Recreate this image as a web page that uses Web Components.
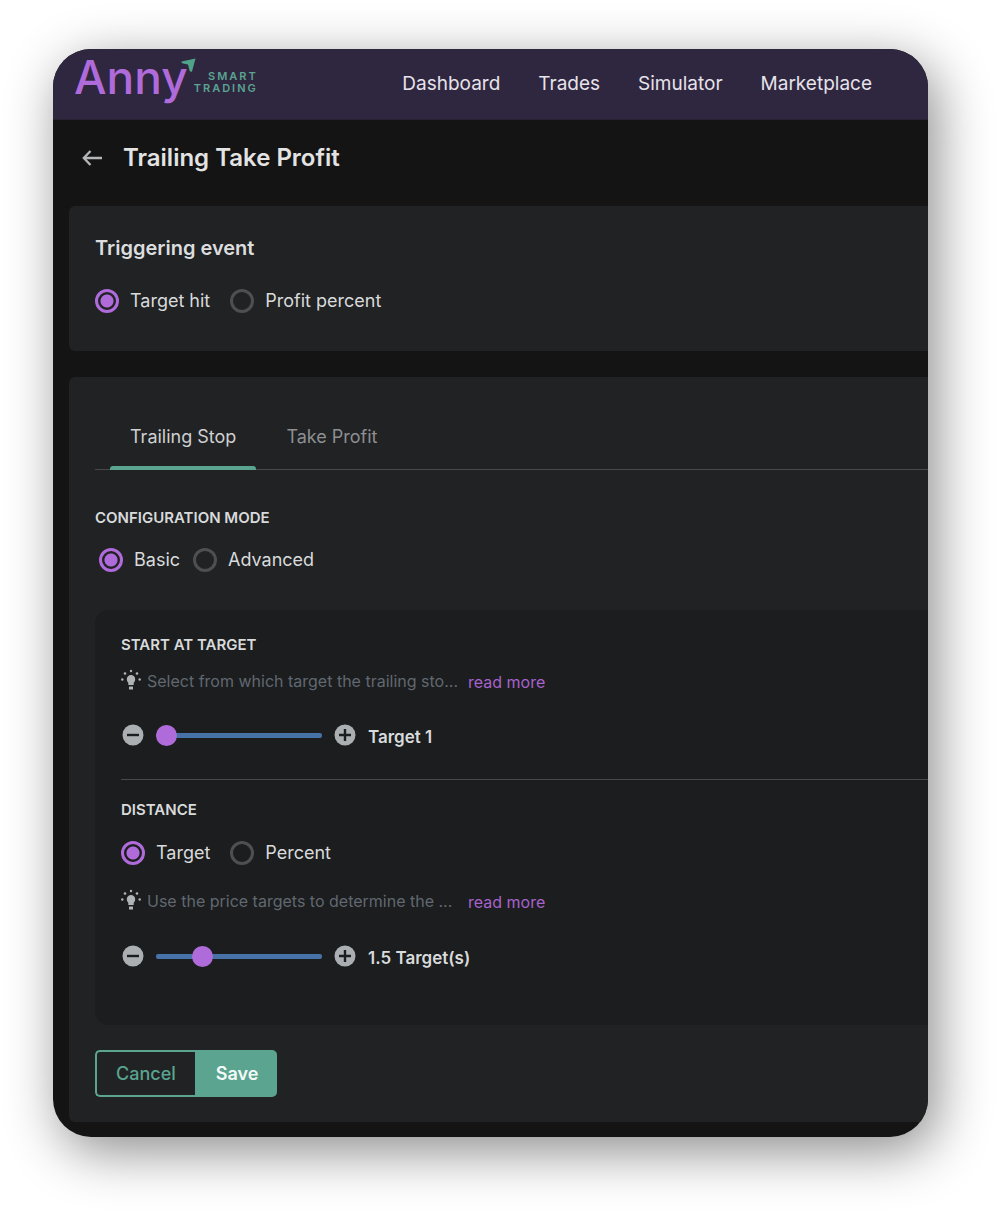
<!DOCTYPE html>
<html lang="en">
<head>
<meta charset="utf-8">
<meta name="viewport" content="width=device-width, initial-scale=1">
<title>Trailing Take Profit</title>
<style>
:root{--purple:#b06bdb;--green:#5aa490;--text:#d9dadb;--line:#47494b;--card:#202224;--panel:#1b1d1e;--page:#141414}
body{margin:0;padding:49px 72px 75px 53px;background:#fff;color:var(--text);font-family:Inter,"Liberation Sans",sans-serif;font-size:18px;line-height:24px}
</style>
</head>
<body>
<app-window>
  <app-header slot="header"></app-header>
  <page-title>Trailing Take Profit</page-title>
  <trigger-card></trigger-card>
  <settings-card></settings-card>
</app-window>
<script>
function define(name, html, setup) {
  customElements.define(name, class extends HTMLElement {
    constructor() {
      super();
      this.attachShadow({mode: 'open'});
    }
    connectedCallback() {
      if (this.shadowRoot.firstChild) return;
      const t = document.createElement('template');
      t.innerHTML = typeof html === 'function' ? html(this) : html;
      this.shadowRoot.append(t.content.cloneNode(true));
      if (setup) setup(this.shadowRoot, this);
    }
  });
}

define('app-window', `
<style>
:host{display:block;background:var(--page);border-radius:38px;box-shadow:8px 14px 54px rgba(0,0,0,.46)}
.clip{overflow:hidden;border-radius:inherit}
main{display:flex;flex-direction:column;gap:26px;padding:25px 0 15px 16px}
</style>
<div class="clip"><slot name="header"></slot><main><slot></slot></main></div>`);

define('brand-logo', `
<style>
:host{display:block}
a{display:flex;align-items:flex-start;color:var(--purple);text-decoration:none}
.word{font-size:46px;line-height:56px;font-weight:500}
svg{width:15px;height:15px;margin:9px 0 0 -7px}
.sub{color:var(--green);font-size:11px;line-height:12px;font-weight:600;letter-spacing:2px;text-align:right;margin:21px 0 0 -2px}
.sub span{display:block}
</style>
<a href="#"><span class="word">Anny</span><svg viewBox="0 0 15 15" aria-hidden="true"><path d="M14.500.5L.5 3.600Q0 5 2 5.500L7 6.500L8.500 12.500Q9.500 14.500 11 13.500Z" fill="#4fa389"/></svg><span class="sub"><span>SMART</span><span>TRADING</span></span></a>`);

define('app-header', `
<style>
:host{display:flex;align-items:flex-start;justify-content:space-between;height:71px;box-sizing:border-box;padding:0 56px 0 21px;background:#2f2640;border-bottom:1px solid #28212f}
nav{display:flex;gap:38px;padding-top:23px}
nav a{color:#e6e3ea;text-decoration:none;font-size:19px;line-height:24px}
</style>
<brand-logo></brand-logo>
<nav><a href="#">Dashboard</a><a href="#">Trades</a><a href="#">Simulator</a><a href="#">Marketplace</a></nav>`);

define('page-title', `
<style>
:host{display:flex;align-items:center;gap:19px;padding:0 0 9px 12px}
button{display:flex;border:0;padding:0;background:none;color:#b4b6b7}
svg{width:23px;height:24px}
h1{margin:0;font-size:24px;line-height:26px;font-weight:600;color:#e3e3e3}
</style>
<button aria-label="Back"><svg viewBox="0 0 23 24" fill="none" stroke="currentColor" stroke-width="2.300"><path d="M21 12H3M9.500 5L2.800 12L9.500 19"/></svg></button>
<h1><slot></slot></h1>`);

define('radio-group', el => `
<style>
:host{display:flex;gap:20px}
:host([compact]){gap:13px;padding-left:4px}
label{display:flex;align-items:center;gap:11px}
input{appearance:none;margin:0;width:24px;height:24px;border:3px solid #4d4f51;border-radius:50%}
input:checked{border-color:var(--purple);background:radial-gradient(circle,var(--purple) 6px,transparent 7px)}
</style>
${el.getAttribute('options').split('|').map((o, i) =>
  `<label><input type="radio" name="choice" ${i ? '' : 'checked'}><span>${o}</span></label>`).join('')}`,
(root, el) => { el.setAttribute('role', 'radiogroup'); });

define('trigger-card', `
<style>
:host{display:block;background:var(--card);border-radius:6px 0 0 6px;padding:30px 26px 38px}
h2{margin:0 0 28px;font-size:20px;line-height:25px;font-weight:600;color:#dcddde}
</style>
<h2>Triggering event</h2>
<radio-group options="Target hit|Profit percent" aria-label="Triggering event"></radio-group>`);

define('tab-bar', `
<style>
:host{display:flex;gap:10px;padding-left:15px;border-bottom:1px solid var(--line)}
button{border:0;background:none;font:inherit;color:#8d8f91;padding:0 20px 17px;border-bottom:4px solid transparent;height:45px;margin-bottom:-1px;box-sizing:border-box;position:relative}
button[aria-selected=true]{color:#cfd0d1}
button[aria-selected=true]::after{content:"";position:absolute;left:0;right:0;bottom:-4px;height:4px;background:var(--green);border-radius:3px 3px 0 0}
</style>
<button role="tab" aria-selected="true">Trailing Stop</button><button role="tab" aria-selected="false">Take Profit</button>`,
(root, el) => { el.setAttribute('role', 'tablist'); });

define('section-label', `
<style>
:host{display:block}
h3{margin:0;font-size:15px;line-height:20px;font-weight:600;color:var(--text)}
</style><h3><slot></slot></h3>`);

define('hint-line', `
<style>
:host{display:flex;align-items:center;font-size:16px;line-height:24px;color:#616871}
svg{width:20px;height:24px;margin-right:6px;flex:none}
.copy{width:321px;white-space:nowrap;flex:none}
a{color:#a862cc;text-decoration:none;padding-top:2px}
</style>
<svg viewBox="0 0 20 24" fill="#b1b4b6" aria-hidden="true"><circle cx="10" cy="2" r="1.200"/><circle cx="4" cy="4.500" r="1.300"/><circle cx="16" cy="4.500" r="1.300"/><circle cx="1.300" cy="10.500" r="1.200"/><circle cx="18.700" cy="10.500" r="1.200"/><path d="M7.300 16V13.800Q5.800 12.500 5.800 10.300A4.200 4.200 0 0 1 14.200 10.300Q14.200 12.500 12.700 13.800V16Z"/><path d="M8 17.500H12V20.500H8Z"/></svg>
<span class="copy"><slot></slot></span><a href="#">read more</a>`);

define('step-slider', el => `
<style>
:host{display:flex;align-items:center;gap:11px}
button{display:flex;border:0;padding:0;background:none}
svg{width:24px;height:24px}
input{appearance:none;margin:0;width:166px;height:21px;background:none}
input::-webkit-slider-runnable-track{height:5px;border-radius:2px;background:#4672a8}
input::-webkit-slider-thumb{appearance:none;width:21px;height:21px;margin-top:-8px;border-radius:50%;background:var(--purple)}
output{font-size:17px;font-weight:600;padding-top:4px;line-height:20px}
</style>
<button aria-label="Decrease"><svg viewBox="0 0 24 24"><circle cx="12" cy="12" r="10.500" fill="#abafb2"/><path d="M6 12H18" stroke="#1b1d1e" stroke-width="2.400"/></svg></button>
<input type="range" min="${el.getAttribute('min')}" max="${el.getAttribute('max')}" step="0.5" value="${el.getAttribute('value')}" aria-label="${el.getAttribute('label')}">
<button aria-label="Increase"><svg viewBox="0 0 24 24"><circle cx="12" cy="12" r="10.500" fill="#abafb2"/><path d="M6 12H18M12 6V18" stroke="#1b1d1e" stroke-width="2.400"/></svg></button>
<output><slot></slot></output>`);

define('target-panel', `
<style>
:host{display:block;background:var(--panel);border-radius:14px 0 0 14px;padding:25px 0 57px 26px}
.start{display:flex;flex-direction:column;gap:13px;padding-bottom:32px;border-bottom:1px solid var(--line)}
.distance{display:flex;flex-direction:column;gap:21px;padding-top:20px}
.start step-slider{padding-top:16px}
.distance step-slider{padding-top:9px}
.distance hint-line{padding-top:2px}
</style>
<section class="start">
<section-label>START AT TARGET</section-label>
<hint-line>Select from which target the trailing sto...</hint-line>
<step-slider min="1" max="5" value="1" label="Start at target">Target 1</step-slider>
</section>
<section class="distance">
<section-label>DISTANCE</section-label>
<radio-group options="Target|Percent" aria-label="Distance"></radio-group>
<hint-line>Use the price targets to determine the ...</hint-line>
<step-slider min="0.5" max="4.5" value="1.5" label="Distance">1.5 Target(s)</step-slider>
</section>`);

define('form-actions', `
<style>
:host{display:flex}
button{font:inherit;font-weight:500;height:47px;box-sizing:border-box;border:2px solid var(--green);padding:0 19px;background:none;color:var(--green);border-radius:5px 0 0 5px;border-right:0}
.save{background:var(--green);color:#f4faf8;border-radius:0 5px 5px 0;font-weight:600}
</style>
<button type="button">Cancel</button><button type="button" class="save">Save</button>`);

define('settings-card', `
<style>
:host{display:block;background:var(--card);border-radius:6px 0 0 6px;padding:48px 0 25px 26px}
section-label{margin:38px 0 20px}
radio-group{margin-bottom:38px}
form-actions{margin-top:25px}
</style>
<tab-bar></tab-bar>
<section-label>CONFIGURATION MODE</section-label>
<radio-group compact options="Basic|Advanced" aria-label="Configuration mode"></radio-group>
<target-panel></target-panel>
<form-actions></form-actions>`);
</script>
</body>
</html>
